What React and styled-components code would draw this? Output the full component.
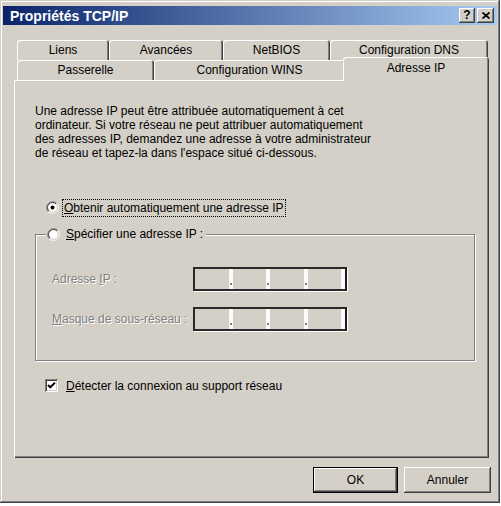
import React from 'react';
import styled, { createGlobalStyle, css } from 'styled-components';

const face = '#d4d0c8';

const GlobalStyle = createGlobalStyle`
  html, body {
    margin: 0;
    padding: 0;
    background: #fff;
  }
  body {
    font-family: "Liberation Sans", Arial, sans-serif;
    font-size: 12px;
    color: #000;
  }
`;

const raised = css`
  box-shadow: inset -1px -1px #404040, inset 1px 1px #fff, inset -2px -2px #808080, inset 2px 2px ${face};
`;

const Window = styled.div`
  box-sizing: border-box;
  width: 500px;
  height: 503px;
  padding: 6px 3px 0 3px;
  background: ${face};
  box-shadow: inset -1px -1px #404040, inset 1px 1px ${face}, inset -2px -2px #808080, inset 2px 2px #fff;
  display: flex;
  flex-direction: column;
`;

const TitleBar = styled.div`
  height: 19px;
  display: flex;
  align-items: center;
  padding: 0 3px 0 7px;
  background: linear-gradient(to right, #0a246a, #a6caf0);
`;

const TitleText = styled.div`
  flex: 1;
  color: #fff;
  font-weight: bold;
  font-size: 14px;
`;

const CaptionButtons = styled.div`
  display: flex;
  gap: 2px;
`;

const CaptionButton = styled.div`
  box-sizing: border-box;
  width: ${({ $w }) => $w}px;
  height: 15px;
  background: ${face};
  ${raised};
  display: flex;
  align-items: center;
  justify-content: center;
  font-weight: bold;
  font-size: 12px;
  padding-bottom: 1px;
`;

const Body = styled.div`
  flex: 1;
  display: flex;
  flex-direction: column;
  padding: 15px 8px 0 11px;
`;

const TabRow = styled.div`
  display: flex;
  height: 20px;
  padding-left: 3px;
`;

const Tab = styled.div`
  box-sizing: border-box;
  flex: none;
  width: ${({ $w }) => $w}px;
  height: 20px;
  padding-top: 3px;
  text-align: center;
  white-space: nowrap;
  background: ${face};
  border-radius: 3px 3px 0 0;
  box-shadow: inset 1px 1px #fff, inset -1px 0 #404040, inset -2px 0 #808080;
  ${({ $active }) => $active && css`
    height: 24px;
    margin-top: -3px;
    margin-left: -2px;
    padding-top: 4px;
    z-index: 1;
  `};
`;

const Panel = styled.div`
  box-sizing: border-box;
  height: 378px;
  padding: 24px 14px 0 21px;
  display: flex;
  flex-direction: column;
  box-shadow: inset 1px 1px #fff, inset -1px -1px #404040, inset -2px -2px #808080;
`;

const Intro = styled.p`
  margin: 0;
  line-height: 14px;
`;

const OptionRow = styled.div`
  display: flex;
  align-items: center;
  gap: 4px;
  height: 17px;
  margin-top: ${({ $top }) => $top}px;
  margin-left: ${({ $left }) => $left}px;
`;

const FocusLabel = styled.span`
  outline: 1px dotted #000;
  padding: 1px 2px 1px 1px;
`;

const Group = styled.fieldset`
  box-sizing: border-box;
  width: 440px;
  margin: 10px 0 0 0;
  padding: 0 0 29px 0;
  border: 1px solid #808080;
  box-shadow: 1px 1px #fff, inset 1px 1px #fff;
  min-width: 0;
`;

const Legend = styled.legend`
  display: flex;
  align-items: center;
  gap: 6px;
  height: 16px;
  margin-left: 10px;
  padding: 0 3px 0 1px;
  background: ${face};
`;

const FieldRow = styled.div`
  display: flex;
  align-items: center;
  height: 24px;
  margin: ${({ $top }) => $top}px 0 0 16px;
`;

const DisabledLabel = styled.span`
  width: 141px;
  color: #808080;
  text-shadow: 1px 1px 0 #fff;
`;

const IpField = styled.div`
  box-sizing: border-box;
  width: 154px;
  height: 24px;
  display: flex;
  border: 2px solid #2a2a2a;
  border-right-color: #1a1a1a;
  box-shadow: 1px 1px 0 #fff;
`;

const IpSegment = styled.div`
  flex: 1;
`;

const IpDot = styled.div`
  width: 4px;
  background: #fbfbfb;
  display: flex;
  align-items: flex-end;
  justify-content: center;
  padding-bottom: 4px;
  box-sizing: border-box;
  &::after {
    content: '';
    width: 2px;
    height: 2px;
    background: ${({ $empty }) => ($empty ? 'transparent' : '#808080')};
  }
`;

const CheckBox = styled.span`
  position: relative;
  width: 13px;
  height: 13px;
  flex: none;
  background: #fff;
  box-shadow: inset 1px 1px #808080, inset -1px -1px #fff, inset 2px 2px #404040, inset -2px -2px ${face};
  display: flex;
  align-items: center;
  justify-content: center;
`;

const ButtonRow = styled.div`
  display: flex;
  justify-content: flex-end;
  gap: 6px;
  margin: 9px -2px 0 0;
`;

const PushButton = styled.div`
  box-sizing: border-box;
  width: ${({ $w }) => $w}px;
  height: 26px;
  display: flex;
  align-items: center;
  justify-content: center;
  background: ${face};
  ${raised};
  ${({ $default }) => $default && css`
    box-shadow: inset 0 0 0 1px #000, inset -2px -2px #404040, inset 2px 2px #fff, inset -3px -3px #808080;
  `};
`;

const Radio = ({ checked }) => (
  <svg width="13" height="13" viewBox="0 0 13 13" style={{ flex: 'none' }}>
    <circle cx="6.5" cy="6.5" r="4.5" fill="#fff" />
    <path d="M2.26 10.74 A6 6 0 0 1 10.74 2.26" fill="none" stroke="#808080" />
    <path d="M10.74 2.26 A6 6 0 0 1 2.26 10.74" fill="none" stroke="#fff" />
    <path d="M2.96 10.04 A5 5 0 0 1 10.04 2.96" fill="none" stroke="#404040" />
    <path d="M10.04 2.96 A5 5 0 0 1 2.96 10.04" fill="none" stroke={face} />
    {checked && <circle cx="6.5" cy="6.5" r="2" fill="#000" />}
  </svg>
);

const IpAddress = () => (
  <IpField>
    <IpSegment />
    <IpDot />
    <IpSegment />
    <IpDot />
    <IpSegment />
    <IpDot />
    <IpSegment />
    <IpDot $empty />
  </IpField>
);

const rowOne = [
  { label: 'Liens', w: 92 },
  { label: 'Avancées', w: 114 },
  { label: 'NetBIOS', w: 107 },
  { label: 'Configuration DNS', w: 158 },
];

const rowTwo = [
  { label: 'Passerelle', w: 137 },
  { label: 'Configuration WINS', w: 191 },
  { label: 'Adresse IP', w: 146, active: true },
];

const App = () => (
  <>
    <GlobalStyle />
    <Window>
      <TitleBar>
        <TitleText>Propriétés TCP/IP</TitleText>
        <CaptionButtons>
          <CaptionButton $w={16}>?</CaptionButton>
          <CaptionButton $w={17}>
            <svg width="8" height="7" viewBox="0 0 8 7">
              <path d="M0.5 0.5 L7.5 6.5 M7.5 0.5 L0.5 6.5" stroke="#000" strokeWidth="1.7" />
            </svg>
          </CaptionButton>
        </CaptionButtons>
      </TitleBar>
      <Body>
        <TabRow>
          {rowOne.map(t => <Tab key={t.label} $w={t.w}>{t.label}</Tab>)}
        </TabRow>
        <TabRow>
          {rowTwo.map(t => <Tab key={t.label} $w={t.w} $active={t.active}>{t.label}</Tab>)}
        </TabRow>
        <Panel>
          <Intro>
            Une adresse IP peut être attribuée automatiquement à cet<br />
            ordinateur. Si votre réseau ne peut attribuer automatiquement<br />
            des adresses IP, demandez une adresse à votre administrateur<br />
            de réseau et tapez-la dans l'espace situé ci-dessous.
          </Intro>
          <OptionRow $top={39} $left={11}>
            <Radio checked />
            <FocusLabel><u>O</u>btenir automatiquement une adresse IP</FocusLabel>
          </OptionRow>
          <Group>
            <Legend>
              <Radio />
              <span><u>S</u>pécifier une adresse IP :</span>
            </Legend>
            <FieldRow $top={25}>
              <DisabledLabel>Adresse <u>I</u>P :</DisabledLabel>
              <IpAddress />
            </FieldRow>
            <FieldRow $top={16}>
              <DisabledLabel><u>M</u>asque de sous-réseau :</DisabledLabel>
              <IpAddress />
            </FieldRow>
          </Group>
          <OptionRow $top={16} $left={10}>
            <CheckBox>
              <svg width="9" height="9" viewBox="0 0 9 9">
                <path d="M1 4 L3.3 6.3 L8 1.6" fill="none" stroke="#000" strokeWidth="2" />
              </svg>
            </CheckBox>
            <span style={{ marginLeft: 4 }}><u>D</u>étecter la connexion au support réseau</span>
          </OptionRow>
        </Panel>
        <ButtonRow>
          <PushButton $w={85} $default>OK</PushButton>
          <PushButton $w={87}>Annuler</PushButton>
        </ButtonRow>
      </Body>
    </Window>
  </>
);

export default App;
